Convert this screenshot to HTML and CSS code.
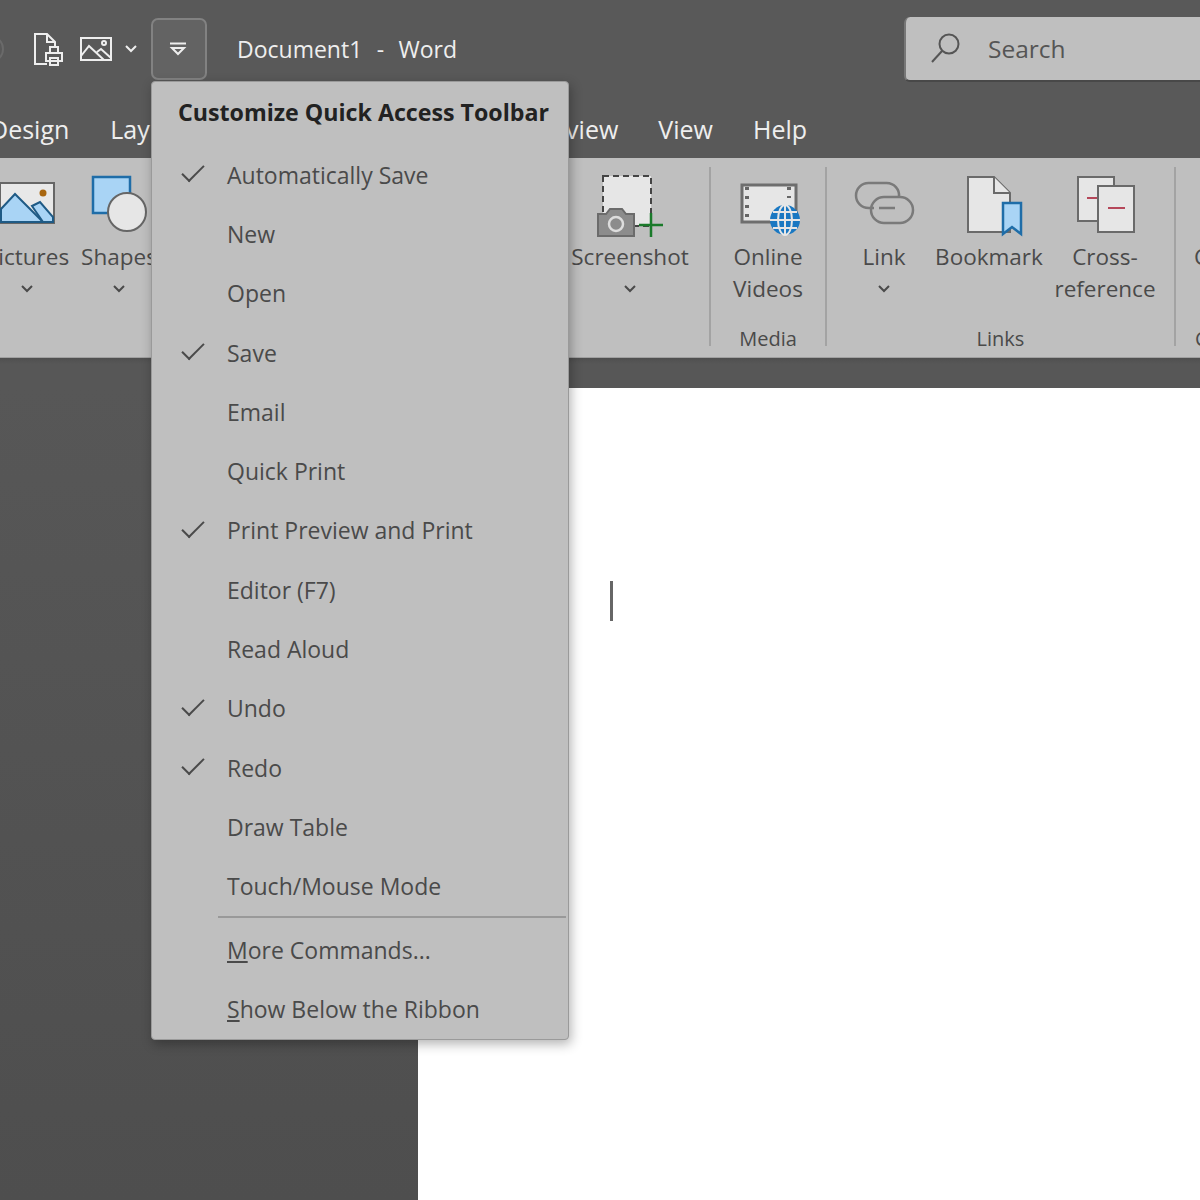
FILE: index.html
```html
<!DOCTYPE html>
<html lang="en">
<head>
    <meta charset="UTF-8">
    <title>Document1 - Word</title>
    <link rel="stylesheet" href="styles.css">
</head>
<body>
    <div class="titlebar">
        <div class="qat-circle"></div>
        <svg class="qat-print" width="32" height="34" viewBox="0 0 32 34" fill="none" stroke="#eee" stroke-width="2">
            <path d="M14 32H2V2H14L22 10V15M14 2V10H22"/>
            <path d="M13 21H29V29H13ZM17 21V15H25V21M17 26H25V33H17Z" fill="#595959"/>
        </svg>
        <svg class="qat-picture" width="32" height="24" viewBox="0 0 32 24" fill="none" stroke="#eee" stroke-width="2">
            <rect x="1" y="1" width="30" height="22"/>
            <path d="M1 19L9 9L24 23M17 15L21 12L31 21"/>
            <circle cx="24" cy="6" r="2"/>
        </svg>
        <svg class="qat-chevron" width="12" height="8" viewBox="0 0 12 8" fill="none" stroke="#eee" stroke-width="2"><path d="M1 1L6 6L11 1"/></svg>
        <div class="qat-button">
            <svg width="18" height="14" viewBox="0 0 18 14" fill="none" stroke="#eee" stroke-width="2"><path d="M1 1.5H17M3 6L9 12L15 6Z"/></svg>
        </div>
        <div class="doc-title">Document1&nbsp; - &nbsp;Word</div>
        <div class="search">
            <svg width="30" height="32" viewBox="0 0 30 32" fill="none" stroke="#555" stroke-width="2"><circle cx="18" cy="12" r="9.5"/><path d="M11 19L1 30"/></svg>
            <span>Search</span>
        </div>
    </div>

    <div class="tabs">
        <span>Design</span>
        <div class="tabs-hidden">
            <span>Lay</span>
            <span>view</span>
        </div>
        <span>View</span>
        <span>Help</span>
    </div>

    <div class="ribbon">
        <div class="group group-pictures">
            <div class="buttons">
                <div class="rib-btn btn-pictures">
                    <svg width="56" height="66" viewBox="0 0 56 66">
                        <rect x="1" y="11" width="54" height="40" fill="#e8e8e8" stroke="#666" stroke-width="2"/>
                        <path d="M2 37L16 22L44 50H2Z" fill="#a9d4f5" stroke="#1e5a85" stroke-width="2"/>
                        <path d="M33 34L41 30L54 45V50H44Z" fill="#a9d4f5" stroke="#1e5a85" stroke-width="2"/>
                        <circle cx="44" cy="21" r="3.5" fill="#a8660f"/>
                    </svg>
                    <div class="label">Pictures</div>
                    <svg class="chevron" width="12" height="8" viewBox="0 0 12 8"><path d="M1 1L6 6L11 1"/></svg>
                </div>
                <div class="rib-btn btn-shapes">
                    <svg width="56" height="66" viewBox="0 0 56 66">
                        <rect x="2" y="5" width="37" height="36" fill="#a9d4f5" stroke="#1f6da8" stroke-width="2.5"/>
                        <circle cx="36" cy="40" r="19" fill="#e6e6e6" stroke="#666" stroke-width="2"/>
                    </svg>
                    <div class="label">Shapes</div>
                    <svg class="chevron" width="12" height="8" viewBox="0 0 12 8"><path d="M1 1L6 6L11 1"/></svg>
                </div>
                <div class="ribbon-gap"></div>
                <div class="rib-btn btn-screenshot">
                    <svg width="66" height="66" viewBox="0 0 66 66">
                        <rect x="6" y="4" width="48" height="50" fill="#e6e6e6" stroke="#444" stroke-width="2" stroke-dasharray="6 4"/>
                        <path d="M1 42H9L13 37H25L29 42H37V64H1Z" fill="#8c8c8c" stroke="#6b6b6b" stroke-width="2"/>
                        <circle cx="19" cy="52" r="7" fill="#8c8c8c" stroke="#ddd" stroke-width="2.5"/>
                        <path d="M42 53H66M54 41V65" stroke="#1a7a2a" stroke-width="2.5"/>
                    </svg>
                    <div class="label">Screenshot</div>
                    <svg class="chevron" width="12" height="8" viewBox="0 0 12 8"><path d="M1 1L6 6L11 1"/></svg>
                </div>
            </div>
        </div>

        <div class="group group-media">
            <div class="buttons">
                <div class="rib-btn btn-videos">
                    <svg width="66" height="66" viewBox="0 0 66 66">
                        <rect x="7" y="13" width="54" height="37" fill="#e6e6e6" stroke="#6e6e6e" stroke-width="3"/>
                        <path d="M12 15V48M54 15V26" stroke="#666" stroke-width="4" stroke-dasharray="3 6"/>
                        <circle cx="50" cy="48" r="15" fill="#1a78c2"/>
                        <path d="M35 48H65M50 33V63M38 40H62M38 56H62" stroke="#e6e6e6" stroke-width="2"/>
                        <ellipse cx="50" cy="48" rx="7" ry="15" fill="none" stroke="#e6e6e6" stroke-width="2"/>
                    </svg>
                    <div class="label">Online<br>Videos</div>
                </div>
            </div>
            <div class="group-name">Media</div>
        </div>

        <div class="group group-links">
            <div class="buttons">
                <div class="rib-btn btn-link">
                    <svg width="64" height="66" viewBox="0 0 64 66" fill="none" stroke="#7a7a7a" stroke-width="2.5">
                        <path d="M22 36H16.5A12.5 12.5 0 0 1 16.5 11H34.5A12.5 12.5 0 0 1 47 25"/>
                        <rect x="19" y="25" width="42" height="26" rx="13"/>
                        <path d="M27 36H43"/>
                    </svg>
                    <div class="label">Link</div>
                    <svg class="chevron" width="12" height="8" viewBox="0 0 12 8"><path d="M1 1L6 6L11 1"/></svg>
                </div>
                <div class="rib-btn btn-bookmark">
                    <svg width="70" height="66" viewBox="0 0 70 66">
                        <path d="M14 5H40L56 21V60H14Z" fill="#e6e6e6" stroke="#6a6a6a" stroke-width="2"/>
                        <path d="M40 5V21H56" fill="#e6e6e6" stroke="#6a6a6a" stroke-width="2"/>
                        <path d="M49 31H67V62L58 55L49 62Z" fill="#a9d4f5" stroke="#1f6da8" stroke-width="2.5"/>
                    </svg>
                    <div class="label">Bookmark</div>
                </div>
                <div class="rib-btn btn-cross">
                    <svg width="64" height="66" viewBox="0 0 64 66">
                        <rect x="5" y="5" width="36" height="44" fill="#e6e6e6" stroke="#6a6a6a" stroke-width="2"/>
                        <path d="M14 26H24" stroke="#b5475a" stroke-width="2"/>
                        <rect x="25" y="14" width="36" height="46" fill="#e6e6e6" stroke="#6a6a6a" stroke-width="2"/>
                        <path d="M35 36H52" stroke="#b5475a" stroke-width="2"/>
                    </svg>
                    <div class="label">Cross-<br>reference</div>
                </div>
            </div>
            <div class="group-name">Links</div>
        </div>

        <div class="group group-comments">
            <div class="buttons">
                <div class="rib-btn btn-comment">
                    <div class="icon-slot"></div>
                    <div class="label">Comment</div>
                </div>
            </div>
            <div class="group-name">Comments</div>
        </div>
    </div>

    <div class="ribbon-shade"></div>

    <div class="workspace">
        <div class="canvas-side"></div>
        <div class="page">
            <div class="caret"></div>
        </div>
    </div>

    <div class="menu">
        <div class="menu-title">Customize Quick Access Toolbar</div>
        <div class="menu-item checked">Automatically Save</div>
        <div class="menu-item">New</div>
        <div class="menu-item">Open</div>
        <div class="menu-item checked">Save</div>
        <div class="menu-item">Email</div>
        <div class="menu-item">Quick Print</div>
        <div class="menu-item checked">Print Preview and Print</div>
        <div class="menu-item">Editor (F7)</div>
        <div class="menu-item">Read Aloud</div>
        <div class="menu-item checked">Undo</div>
        <div class="menu-item checked">Redo</div>
        <div class="menu-item">Draw Table</div>
        <div class="menu-item">Touch/Mouse Mode</div>
        <div class="menu-sep"></div>
        <div class="menu-item"><span><u>M</u>ore Commands...</span></div>
        <div class="menu-item"><span><u>S</u>how Below the Ribbon</span></div>
    </div>
</body>
</html>
```

FILE: styles.css
```css
body {
    margin: 0;
    width: 1200px;
    height: 1200px;
    overflow: hidden;
    position: relative;
    background: #595959;
    font-family: 'Open Sans', sans-serif;
    font-size: 23px;
}

/* Title bar */
.titlebar {
    display: flex;
    align-items: center;
    box-sizing: border-box;
    height: 82px;
    padding-top: 16px;
    color: #eee;
}

.qat-circle {
    flex: none;
    width: 24px;
    height: 24px;
    margin-left: -24px;
    border: 2px solid #6a6a6a;
    border-radius: 50%;
}

.qat-print {
    flex: none;
    margin-left: 29px;
}

.qat-picture {
    flex: none;
    margin-left: 15px;
}

.qat-chevron {
    flex: none;
    margin-left: 13px;
}

.qat-button {
    flex: none;
    display: flex;
    align-items: center;
    justify-content: center;
    box-sizing: border-box;
    width: 56px;
    height: 62px;
    margin-left: 14px;
    background: #636363;
    border: 2px solid #828282;
    border-radius: 7px;
}

.qat-button svg {
    margin-left: -3px;
}

.doc-title {
    flex: 1;
    margin-left: 30px;
    white-space: nowrap;
    word-spacing: 1.2px;
}

.search {
    flex: none;
    display: flex;
    align-items: center;
    gap: 27px;
    box-sizing: border-box;
    width: 320px;
    height: 65px;
    margin-right: -24px;
    padding-left: 25px;
    background: #bfbfbf;
    border-left: 2px solid #777;
    border-bottom: 2px solid #484848;
    border-radius: 6px;
    color: #555;
    font-size: 24.5px;
}

/* Tabs */
.tabs {
    display: flex;
    align-items: center;
    gap: 40px;
    height: 76px;
    margin-left: -10px;
    padding-top: 18px;
    box-sizing: border-box;
    color: #eee;
    font-size: 25px;
}

.tabs-hidden {
    display: flex;
    justify-content: space-between;
    width: 508px;
    margin-left: 1px;
}

/* Ribbon */
.ribbon {
    display: flex;
    box-sizing: border-box;
    height: 200px;
    margin-left: -20px;
    padding: 9px 0 11px;
    background: #bfbfbf;
    border-bottom: 1px solid #a0a0a0;
    color: #4a4a4a;
    font-size: 22.5px;
}

.group {
    flex: none;
    display: flex;
    flex-direction: column;
    align-items: center;
    justify-content: space-between;
    box-sizing: border-box;
    padding-top: 5px;
    border-right: 2px solid #a3a3a3;
}

.buttons {
    display: flex;
}

.group-pictures {
    width: 731px;
    align-items: flex-start;
}

.group-media {
    width: 116px;
}

.group-links {
    width: 349px;
}

.group-links .buttons {
    align-self: flex-start;
    margin-left: 23px;
}

.group-comments {
    width: 140px;
    border-right: none;
}

.rib-btn {
    flex: none;
    display: flex;
    flex-direction: column;
    align-items: center;
    text-align: center;
}

.btn-pictures { width: 94px; }
.btn-shapes { width: 90px; }
.ribbon-gap { width: 406px; }
.btn-screenshot { width: 120px; }
.btn-videos { width: 114px; }
.btn-link { width: 68px; }
.btn-bookmark { width: 118px; margin-left: 12px; }
.btn-cross { width: 114px; }
.btn-comment { width: 140px; }

.icon-slot {
    height: 66px;
}

.rib-btn svg {
    display: block;
}

.label {
    margin-top: 3px;
    line-height: 32px;
    white-space: nowrap;
}

.rib-btn .chevron {
    margin-top: 12px;
    fill: none;
    stroke: #4a4a4a;
    stroke-width: 2;
}

.group-name {
    margin-bottom: -5px;
    font-size: 20px;
    line-height: 24px;
}

.ribbon-shade {
    height: 30px;
    background: linear-gradient(#4f4f4f, #575757 20%);
}

/* Document area */
.workspace {
    display: flex;
    height: 812px;
}

.canvas-side {
    width: 418px;
    background: linear-gradient(#575757, #4e4e4e);
}

.page {
    flex: 1;
    padding: 193px 0 0 192px;
    background: #fff;
}

.caret {
    width: 3px;
    height: 40px;
    background: #666;
}

/* Dropdown menu */
.menu {
    position: absolute;
    left: 151px;
    top: 81px;
    box-sizing: border-box;
    width: 418px;
    height: 959px;
    background: #bfbfbf;
    border: 1px solid #9a9a9a;
    border-radius: 4px;
    box-shadow: 2px 4px 12px rgba(0, 0, 0, 0.3);
    color: #4a4a4a;
}

.menu-title {
    padding: 14px 0 0 26px;
    height: 63px;
    box-sizing: border-box;
    font-weight: 700;
    font-size: 23.2px;
    line-height: 32px;
    color: #222;
    white-space: nowrap;
}

.menu-item {
    display: flex;
    align-items: center;
    height: 59.3px;
    padding-left: 75px;
    position: relative;
}

.menu-item.checked::before {
    content: '';
    position: absolute;
    left: 30px;
    top: 20px;
    width: 20px;
    height: 9px;
    border-left: 2px solid #4a4a4a;
    border-bottom: 2px solid #4a4a4a;
    transform: rotate(-45deg);
}

.menu-sep {
    height: 2px;
    margin: 0 2px 2px 66px;
    background: #999;
}
```
